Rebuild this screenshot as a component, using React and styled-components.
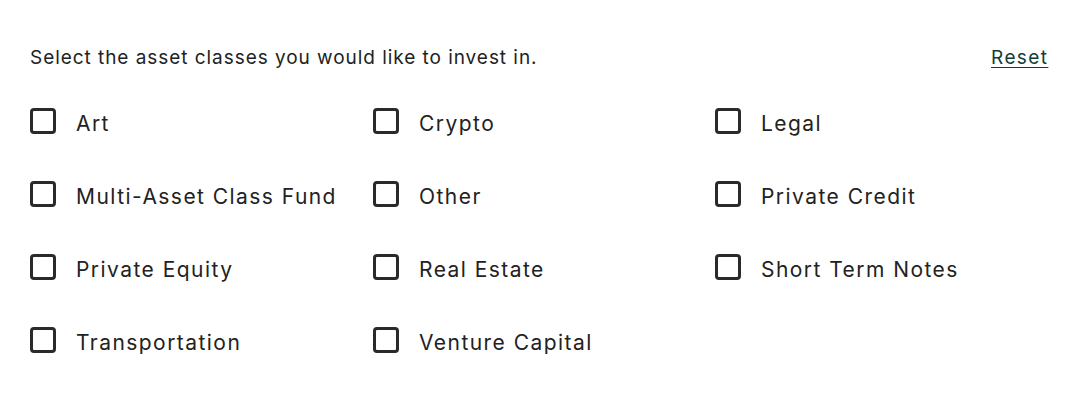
import React, { useState } from 'react'
import styled, { createGlobalStyle } from 'styled-components'

const GlobalStyle = createGlobalStyle`
  html, body {
    margin: 0;
    padding: 0;
    background: #ffffff;
  }
  body {
    font-family: Inter, "Open Sans", sans-serif;
    color: #222222;
  }
`

const ASSETS = [
  'Art',
  'Crypto',
  'Legal',
  'Multi-Asset Class Fund',
  'Other',
  'Private Credit',
  'Private Equity',
  'Real Estate',
  'Short Term Notes',
  'Transportation',
  'Venture Capital',
]

export default function App() {
  const [picked, setPicked] = useState([])

  const toggle = (name) => {
    setPicked(picked.includes(name)
      ? picked.filter((p) => p !== name)
      : [...picked, name])
  }

  return (
    <>
      <GlobalStyle />
      <Panel>
        <Header>
          <Prompt>Select the asset classes you would like to invest in.</Prompt>
          <ResetLink onClick={() => setPicked([])}>Reset</ResetLink>
        </Header>
        <Options>
          {ASSETS.map((name) => (
            <Option key={name} onClick={() => toggle(name)}>
              <Box checked={picked.includes(name)} />
              <Label>{name}</Label>
            </Option>
          ))}
        </Options>
      </Panel>
    </>
  )
}

const Panel = styled.div`
  width: 1071px;
  box-sizing: border-box;
  padding: 46px 24px 40px 30px;
`

const Header = styled.div`
  display: flex;
  justify-content: space-between;
  align-items: center;
  height: 24px;
`

const Prompt = styled.p`
  margin: 0;
  font-size: 19px;
  line-height: 24px;
  letter-spacing: 0.95px;
  color: #222222;
`

const ResetLink = styled.a`
  font-size: 19px;
  line-height: 24px;
  letter-spacing: 1.4px;
  margin-right: -1.4px;
  color: #0f3d38;
  text-decoration: underline;
  text-underline-offset: 3px;
  cursor: pointer;
`

const Options = styled.div`
  display: grid;
  grid-template-columns: 343px 342px 1fr;
  row-gap: 41px;
  margin-top: 35px;
`

const Option = styled.label`
  display: flex;
  align-items: center;
  gap: 20px;
  height: 32px;
  cursor: pointer;
`

const Box = styled.span`
  width: 26px;
  height: 26px;
  box-sizing: border-box;
  border: 3px solid #2a2a2a;
  border-radius: 4px;
  flex-shrink: 0;
  background: ${(p) => (p.checked ? '#0f3d38' : 'transparent')};
`

const Label = styled.span`
  padding-top: 6px;
  font-size: 21px;
  line-height: 28px;
  letter-spacing: 1.45px;
  color: #222222;
  white-space: nowrap;
`
